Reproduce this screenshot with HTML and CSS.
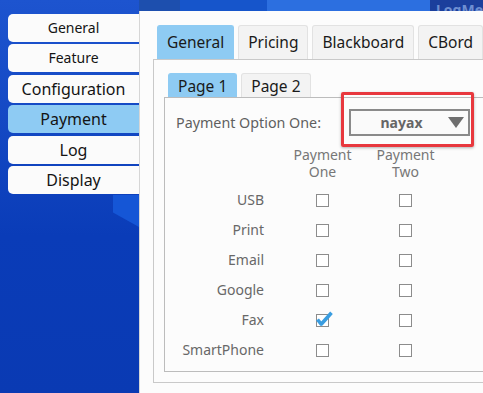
FILE: index.html
```html
<!DOCTYPE html>
<html lang="en">
<head>
    <meta charset="UTF-8">
    <meta name="viewport" content="width=device-width, initial-scale=1.0">
    <title>Settings - Payment</title>
    <link rel="stylesheet" href="styles.css">
</head>
<body>
    <div class="sidebar">
        <button class="side-btn small">General</button>
        <button class="side-btn small">Feature</button>
        <button class="side-btn">Configuration</button>
        <button class="side-btn active">Payment</button>
        <button class="side-btn">Log</button>
        <button class="side-btn">Display</button>
        <div class="glint"></div>
    </div>
    <div class="main">
        <div class="topbar">
            <span class="bar-a"></span>
            <span class="bar-b"></span>
            <span class="bar-c"></span>
            <span class="bar-d">LogMe</span>
        </div>
        <div class="panel">
            <div class="tabs">
                <div class="tab active">General</div>
                <div class="tab">Pricing</div>
                <div class="tab">Blackboard</div>
                <div class="tab">CBord</div>
            </div>
            <div class="tab-body">
                <div class="subtabs">
                    <div class="subtab active">Page 1</div>
                    <div class="subtab">Page 2</div>
                </div>
                <div class="page">
                    <div class="option-row">
                        <span class="option-label">Payment Option One:</span>
                        <div class="select">
                            <span class="select-value">nayax</span>
                            <span class="caret"></span>
                        </div>
                    </div>
                    <div class="highlight"></div>
                    <div class="grid">
                        <div class="head"></div>
                        <div class="head"><div>Payment</div><div>One</div></div>
                        <div class="head"><div>Payment</div><div>Two</div></div>

                        <div class="label">USB</div>
                        <div class="cell"><span class="check"></span></div>
                        <div class="cell"><span class="check"></span></div>

                        <div class="label">Print</div>
                        <div class="cell"><span class="check"></span></div>
                        <div class="cell"><span class="check"></span></div>

                        <div class="label">Email</div>
                        <div class="cell"><span class="check"></span></div>
                        <div class="cell"><span class="check"></span></div>

                        <div class="label">Google</div>
                        <div class="cell"><span class="check"></span></div>
                        <div class="cell"><span class="check"></span></div>

                        <div class="label">Fax</div>
                        <div class="cell">
                            <span class="check checked">
                                <svg class="tick" width="18" height="16" viewBox="0 0 18 16">
                                    <path d="M1.5 8.5 L5.2 13.2 L15.5 1.8" fill="none" stroke="#3a9de0" stroke-width="3.6" stroke-linejoin="round"/>
                                </svg>
                            </span>
                        </div>
                        <div class="cell"><span class="check"></span></div>

                        <div class="label">SmartPhone</div>
                        <div class="cell"><span class="check"></span></div>
                        <div class="cell"><span class="check"></span></div>
                    </div>
                </div>
            </div>
        </div>
    </div>
</body>
</html>
```

FILE: styles.css
```css
body {
    font-family: "Noto Sans", "Open Sans", sans-serif;
    margin: 0;
    width: 483px;
    height: 393px;
    overflow: hidden;
    display: flex;
    background: linear-gradient(to bottom, #1d54cf 0%, #1449c4 30%, #0a3cb8 60%, #0a3ab3 100%);
}
.sidebar {
    width: 131px;
    padding: 14px 0 0 8px;
    display: flex;
    flex-direction: column;
    gap: 2.4px;
    position: relative;
}
.side-btn {
    height: 28px;
    border: none;
    border-radius: 5px 0 0 5px;
    background-color: #fbfbfb;
    color: #141414;
    font-family: inherit;
    font-size: 16px;
    padding: 0;
    line-height: 28px;
}
.side-btn.small {
    font-size: 14px;
}
.side-btn.active {
    background-color: #8ecbf3;
}
.glint {
    position: absolute;
    left: 113px;
    top: 195px;
    width: 26px;
    height: 32px;
    background-color: #1556d6;
    clip-path: polygon(0 0, 100% 0, 100% 100%, 0 55%);
}
.main {
    flex: 1;
    min-width: 0;
    display: flex;
    flex-direction: column;
}
.topbar {
    height: 11px;
    display: flex;
    overflow: hidden;
}
.bar-a {
    width: 42px;
    background-color: #1d4fae;
}
.bar-b {
    width: 88px;
    background-color: #1655cb;
}
.bar-c {
    width: 165px;
    background-color: #2c6fe0;
}
.bar-d {
    flex: 1;
    background-color: #1b3f9c;
    color: #6e8fd2;
    font-size: 14px;
    font-weight: bold;
    line-height: 14px;
    padding-left: 6px;
    display: flex;
    align-items: flex-end;
    transform: translateY(-6px);
    height: 17px;
    border-top: 6px solid #1b3f9c;
}
.panel {
    flex: 1;
    background-color: #fcfcfc;
    padding: 14px 0 0 13px;
    border-left: 1px solid #d6d6d6;
}
.tabs {
    display: flex;
    gap: 4px;
    margin-left: 4px;
}
.tab {
    height: 34px;
    line-height: 33px;
    padding: 0 9px;
    font-size: 15.5px;
    color: #1a1a1a;
    background-color: #f3f3f3;
    border: 1px solid #e2e2e2;
    border-bottom: none;
    border-radius: 3px 3px 0 0;
    white-space: nowrap;
    box-sizing: border-box;
}
.tab.active {
    background-color: #8ecbf3;
    border-color: #8ecbf3;
}
.tab-body {
    width: 400px;
    height: 324px;
    box-sizing: border-box;
    border: 1px solid #c9c9c9;
    padding: 13px 0 0 14px;
}
.subtabs {
    display: flex;
    gap: 4px;
}
.subtab {
    height: 24px;
    line-height: 24px;
    padding: 0 9px;
    font-size: 15.5px;
    color: #1a1a1a;
    background-color: #f3f3f3;
    border: 1px solid #e2e2e2;
    border-bottom: none;
    border-radius: 3px 3px 0 0;
    box-sizing: border-box;
}
.subtab.active {
    background-color: #8ecbf3;
    border-color: #8ecbf3;
}
.page {
    position: relative;
    margin-left: -4px;
    width: 400px;
    height: 275px;
    box-sizing: border-box;
    border: 1px solid #bcbcbc;
    padding: 11px 0 0 11px;
}
.option-row {
    display: flex;
    align-items: center;
    height: 27px;
}
.option-label {
    width: 173px;
    font-size: 14.3px;
    color: #5f5f5f;
}
.select {
    width: 121px;
    height: 27px;
    box-sizing: border-box;
    border: 2px solid #8a8a8a;
    background-color: #fafafa;
    display: flex;
    align-items: center;
    padding: 0 4px 0 0;
}
.select-value {
    flex: 1;
    text-align: center;
    font-size: 14px;
    font-weight: bold;
    color: #666;
    padding-left: 4px;
}
.caret {
    width: 0;
    height: 0;
    border-left: 8px solid transparent;
    border-right: 8px solid transparent;
    border-top: 11px solid #6e6e6e;
}
.highlight {
    position: absolute;
    left: 176px;
    top: -6px;
    width: 133px;
    height: 55px;
    box-sizing: border-box;
    border: 3px solid #e8383e;
    border-radius: 2px;
    box-shadow: 0 1px 3px rgba(0, 0, 0, 0.3);
}
.grid {
    display: grid;
    grid-template-columns: 105px 83px 83px;
    margin-top: 10px;
}
.head {
    font-size: 14px;
    line-height: 17px;
    color: #777;
    text-align: center;
    padding-bottom: 5px;
}
.label {
    height: 30px;
    line-height: 30px;
    font-size: 14px;
    color: #686868;
    text-align: right;
    padding-right: 17px;
}
.cell {
    height: 30px;
    display: flex;
    align-items: center;
    justify-content: center;
}
.check {
    width: 13px;
    height: 13px;
    box-sizing: border-box;
    border: 1px solid #8c8c8c;
    background-color: #fff;
    position: relative;
}
.tick {
    position: absolute;
    left: -1px;
    top: -4px;
}
```
